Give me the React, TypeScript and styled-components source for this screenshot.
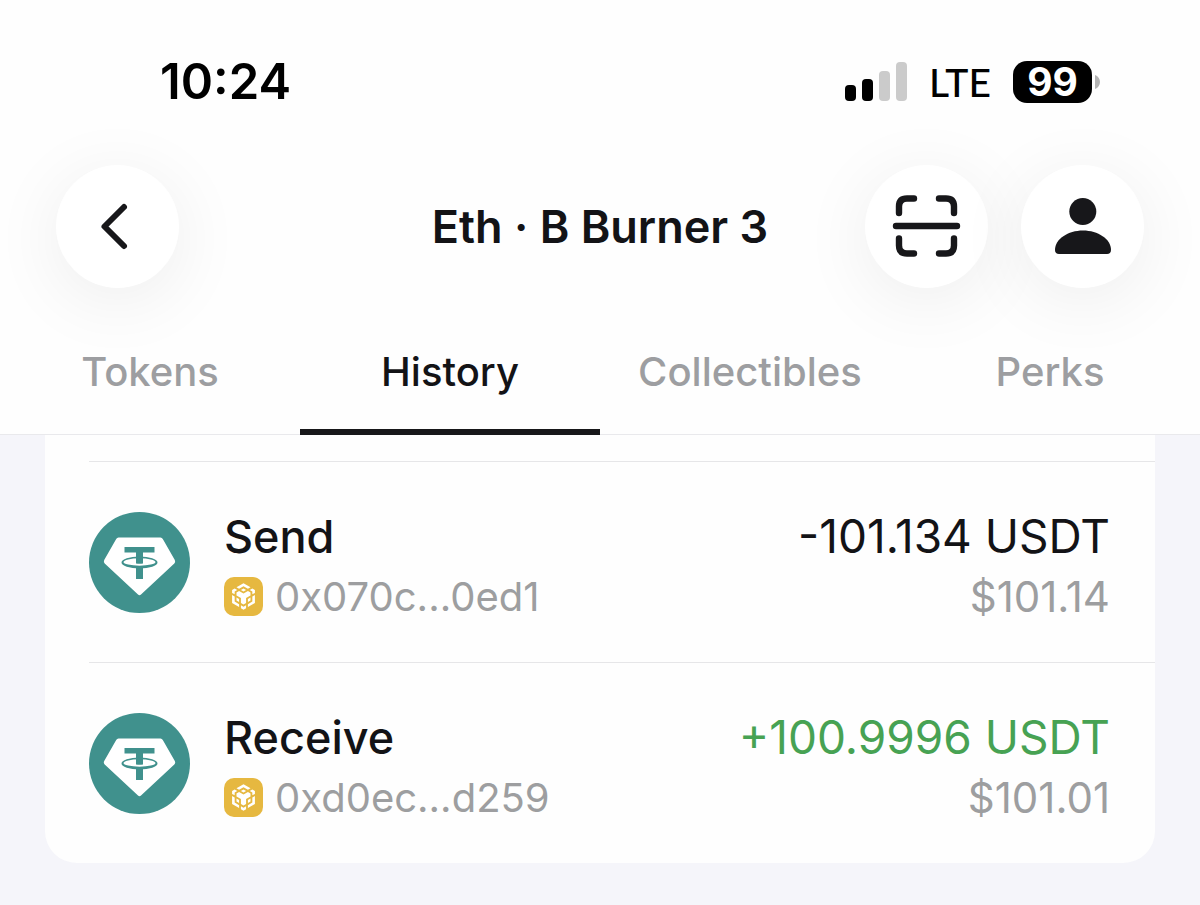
import React from "react";
import styled, { createGlobalStyle } from "styled-components";

const GlobalStyle = createGlobalStyle`
  * { box-sizing: border-box; }
  html, body { margin: 0; background: #f5f5fa; }
  body {
    font-family: Inter, "Liberation Sans", sans-serif;
    color: #131316;
    -webkit-font-smoothing: antialiased;
  }
  button { font: inherit; color: inherit; border: 0; padding: 0; cursor: pointer; }
`;

const Screen = styled.div`
  min-height: 100vh;
`;

const Header = styled.header`
  display: flex;
  flex-direction: column;
  background: #fefefe;
  border-bottom: 1px solid #e9e9ec;
`;

const StatusBar = styled.div`
  display: flex;
  align-items: center;
  justify-content: space-between;
  height: 165px;
  padding: 0 100px 2px 160px;
  color: #000;
`;

const Clock = styled.time`
  font-size: 49px;
  line-height: 56px;
  font-weight: 600;
`;

const StatusIcons = styled.div`
  display: flex;
  align-items: center;
  gap: 22px;
`;

const Carrier = styled.span`
  font-family: Lato, Inter, sans-serif;
  font-size: 39px;
  line-height: 48px;
  font-weight: 500;
`;

const Battery = styled.div`
  display: flex;
  align-items: center;
  gap: 3px;
`;

const BatteryLevel = styled.span`
  display: flex;
  align-items: center;
  justify-content: center;
  width: 79px;
  height: 42px;
  border-radius: 14px;
  background: #000;
  color: #fff;
  font-size: 39px;
  font-weight: 700;
`;

const NavBar = styled.div`
  display: grid;
  grid-template-columns: 1fr auto 1fr;
  align-items: center;
  height: 123px;
  padding: 0 56px;
`;

const NavActions = styled.div`
  display: flex;
  justify-content: flex-end;
  gap: 33px;
`;

const RoundButton = styled.button`
  display: flex;
  align-items: center;
  justify-content: center;
  width: 123px;
  height: 123px;
  border-radius: 50%;
  background: #fff;
  box-shadow: 0 12px 72px rgba(0, 0, 0, 0.07);
`;

const Title = styled.h1`
  margin: 0;
  font-size: 45px;
  line-height: 56px;
  font-weight: 600;
`;

const Tabs = styled.nav`
  display: grid;
  grid-template-columns: repeat(4, 1fr);
  height: 146px;
`;

const Tab = styled.button<{ $active?: boolean }>`
  position: relative;
  padding-top: 22px;
  background: none;
  font-size: 40px;
  line-height: 48px;
  font-weight: 500;
  color: ${(p) => (p.$active ? "#131316" : "#9d9ea1")};

  &::after {
    content: "";
    display: ${(p) => (p.$active ? "block" : "none")};
    position: absolute;
    inset: auto 0 -1px;
    height: 6px;
    background: #17171a;
  }
`;

const Card = styled.main`
  margin: 0 45px 42px;
  padding: 26px 0 0 44px;
  background: #fefefe;
  border-radius: 0 0 32px 32px;
`;

const List = styled.ul`
  list-style: none;
  margin: 0;
  padding: 0;
`;

const Row = styled.li`
  display: flex;
  align-items: center;
  gap: 34px;
  height: 201px;
  padding-right: 45px;
  border-top: 1px solid #e6e6e8;
`;

const Details = styled.div`
  flex: 1;
  display: flex;
  flex-direction: column;
  gap: 4px;
  padding-top: 8px;
`;

const Line = styled.div`
  display: flex;
  align-items: center;
  justify-content: space-between;
  height: 56px;
`;

const Kind = styled.span`
  font-size: 45px;
  font-weight: 500;
`;

const Amount = styled.span<{ $incoming: boolean }>`
  font-size: 46px;
  color: ${(p) => (p.$incoming ? "#47a253" : "#131316")};
`;

const Address = styled.span`
  display: flex;
  align-items: center;
  gap: 12px;
  font-size: 40px;
  color: #9d9ea0;
`;

const Fiat = styled.span`
  font-size: 42px;
  color: #9d9ea0;
`;

const SignalIcon = () => (
  <svg width="62" height="40" viewBox="0 0 62 40" role="img" aria-label="Signal">
    <rect x="0" y="23" width="11" height="16" rx="4" fill="#000" />
    <rect x="17" y="17" width="11" height="22" rx="4" fill="#000" />
    <rect x="34" y="9" width="11" height="30" rx="4" fill="#cbcbcb" />
    <rect x="51" y="0" width="11" height="39" rx="4" fill="#cbcbcb" />
  </svg>
);

const BatteryCap = () => (
  <svg width="5" height="14" viewBox="0 0 5 14" aria-hidden="true">
    <path d="M0 0C3 1 5 4 5 7s-2 6-5 7z" fill="#b3b3b3" />
  </svg>
);

const BackIcon = () => (
  <svg width="123" height="123" viewBox="0 0 123 123" aria-hidden="true">
    <path d="M68 42 48.500 61.500 68 81" fill="none" stroke="#17171a" strokeWidth="6" strokeLinecap="round" strokeLinejoin="round" />
  </svg>
);

const ScanIcon = () => (
  <svg width="123" height="123" viewBox="0 0 123 123" aria-hidden="true">
    <g fill="none" stroke="#17171a" strokeWidth="6.400" strokeLinecap="round">
      <path d="M49 33.500H42q-8 0-8 8V48M74 33.500H81q8 0 8 8V48M34 73.500V80.500q0 8 8 8h7M89 73.500V80.500q0 8-8 8h-7M31 61H92" />
    </g>
  </svg>
);

const ProfileIcon = () => (
  <svg width="123" height="123" viewBox="0 0 123 123" aria-hidden="true">
    <circle cx="61.800" cy="46.500" r="13.500" fill="#17171a" />
    <path d="M38 89C35.500 89 34 87.500 34 85 34 74 47 65.500 62 65.500S90 74 90 85C90 87.500 88.500 89 86 89Z" fill="#17171a" />
  </svg>
);

const TetherIcon = () => (
  <svg width="101" height="101" viewBox="0 0 101 101" role="img" aria-label="Tether">
    <circle cx="50.500" cy="50.500" r="50.500" fill="#40918d" />
    <path d="M29.500 25.500h42q1.500 0 2.300 1.500l12 21q1 2-.500 3.500L52 82.500q-1.500 1.500-3 0L15.700 51.500q-1.500-1.500-.500-3.500l12-21q.8-1.500 2.300-1.500Z" fill="#fff" />
    <path d="M35.500 35h30v5.500H54v6h-7v-6H35.500zM47 55h7v12h-7z" fill="#40918d" />
    <path d="M47 40h7v11.500q-3.500.5-7 0z" fill="#40918d" />
    <path fillRule="evenodd" d="M32.500 50.500a18 5.900 0 1 0 36 0a18 5.900 0 1 0-36 0ZM34.500 50a16 3.700 0 1 0 32 0a16 3.700 0 1 0-32 0Z" fill="#40918d" />
  </svg>
);

const BnbIcon = () => (
  <svg width="39" height="39" viewBox="0 0 39 39" role="img" aria-label="BNB Chain">
    <rect width="39" height="39" rx="10" fill="#e6b840" />
    <path
      transform="translate(6.300 6.300) scale(1.100)"
      fill="#fff"
      d="M5.631 3.676 12.001 0l6.367 3.676-2.340 1.358L12 2.716 7.972 5.034l-2.340-1.358Zm12.737 4.636-2.340-1.358L12 9.272 7.972 6.954l-2.340 1.358v2.716l4.026 2.318v4.636L12 19.341l2.341-1.359v-4.636l4.027-2.318V8.312Zm0 7.352v-2.716l-2.340 1.358v2.716l2.340-1.358Zm1.663.960-4.027 2.318v2.717l6.368-3.677V10.630l-2.340 1.358v4.636Zm-2.340-10.630 2.340 1.358v2.716l2.341-1.358V5.994l-2.340-1.358-2.342 1.358ZM9.657 19.926v2.716L12 24l2.341-1.358v-2.716l-2.340 1.358-2.343-1.358Zm-4.027-4.262 2.341 1.358v-2.716l-2.340-1.358v2.716Zm4.027-9.670L12 7.352l2.341-1.358L12 4.636 9.658 5.994Zm-5.690 1.358 2.341-1.358-2.340-1.358L1.626 5.994V8.710l2.341 1.358V7.352Zm0 4.636L1.627 10.630v7.352l6.368 3.677v-2.717l-4.027-2.318v-4.636Z"
    />
  </svg>
);

const tabs = ["Tokens", "History", "Collectibles", "Perks"];

const transactions = [
  { kind: "Send", address: "0x070c...0ed1", amount: "-101.134 USDT", fiat: "$101.14", incoming: false },
  { kind: "Receive", address: "0xd0ec...d259", amount: "+100.9996 USDT", fiat: "$101.01", incoming: true },
];

export default function App() {
  const [active, setActive] = React.useState("History");
  return (
    <Screen>
      <GlobalStyle />
      <Header>
        <StatusBar>
          <Clock>10:24</Clock>
          <StatusIcons>
            <SignalIcon />
            <Carrier>LTE</Carrier>
            <Battery>
              <BatteryLevel>99</BatteryLevel>
              <BatteryCap />
            </Battery>
          </StatusIcons>
        </StatusBar>
        <NavBar>
          <RoundButton aria-label="Back">
            <BackIcon />
          </RoundButton>
          <Title>Eth · B Burner 3</Title>
          <NavActions>
            <RoundButton aria-label="Scan">
              <ScanIcon />
            </RoundButton>
            <RoundButton aria-label="Profile">
              <ProfileIcon />
            </RoundButton>
          </NavActions>
        </NavBar>
        <Tabs>
          {tabs.map((tab) => (
            <Tab key={tab} $active={tab === active} onClick={() => setActive(tab)}>
              {tab}
            </Tab>
          ))}
        </Tabs>
      </Header>
      <Card>
        <List>
          {transactions.map((tx) => (
            <Row key={tx.address}>
              <TetherIcon />
              <Details>
                <Line>
                  <Kind>{tx.kind}</Kind>
                  <Amount $incoming={tx.incoming}>{tx.amount}</Amount>
                </Line>
                <Line>
                  <Address>
                    <BnbIcon />
                    {tx.address}
                  </Address>
                  <Fiat>{tx.fiat}</Fiat>
                </Line>
              </Details>
            </Row>
          ))}
        </List>
      </Card>
    </Screen>
  );
}
